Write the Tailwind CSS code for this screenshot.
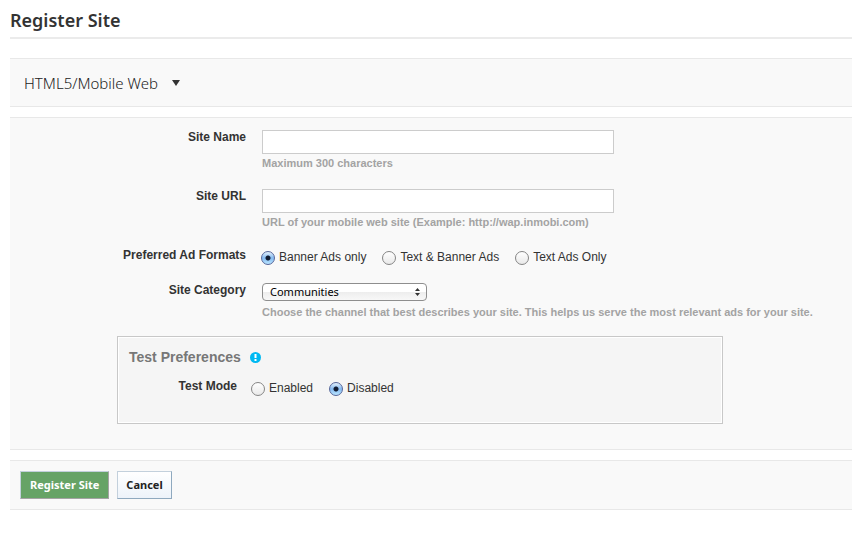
<!DOCTYPE html>
<html lang="en">
<head>
<meta charset="utf-8">
<meta name="viewport" content="width=device-width, initial-scale=1">
<title>Register Site</title>
<script src="https://cdn.jsdelivr.net/npm/@tailwindcss/browser@4"></script>
</head>
<body class="bg-white pl-[10px] font-['Liberation_Sans',Arial,sans-serif] text-[12px] leading-4 text-[#333]">
<header class="h-[39px] border-b-2 border-[#ebebeb] pt-2">
  <h1 class="font-['Noto_Sans',sans-serif] text-[18px] leading-6 font-semibold">Register Site</h1>
</header>
<main>
  <form>
    <section class="mt-[19px] flex h-[49px] items-center border-y border-[#e8e8e8] bg-[#f9f9f9] px-[14px]">
      <button type="button" class="flex items-center gap-[14px] font-['Noto_Sans',sans-serif] text-[15px] leading-6 font-light text-[#222]">
        <span>HTML5/Mobile Web</span>
        <svg class="h-[6px] w-2" viewBox="0 0 8 6" fill="#333" aria-hidden="true"><path d="M0 0h8L4 6z"/></svg>
      </button>
    </section>

    <section class="mt-[10px] border-y border-[#e8e8e8] bg-[#f9f9f9] pt-3 pb-[25px]">
      <div class="grid grid-cols-[236px_1fr] gap-x-4">
        <label for="name" class="text-right font-bold -mt-px">Site Name</label>
        <div class="h-[59px]">
          <input id="name" type="text" class="block h-6 w-[352px] border border-[#ccc] bg-white px-1 outline-none">
          <p class="mt-px text-[11px] font-bold text-[#a3a3a3]">Maximum 300 characters</p>
        </div>
        <label for="url" class="text-right font-bold -mt-px">Site URL</label>
        <div class="h-[59px]">
          <input id="url" type="text" class="block h-6 w-[352px] border border-[#ccc] bg-white px-1 outline-none">
          <p class="mt-px text-[11px] font-bold text-[#a3a3a3]">URL of your mobile web site (Example: http://wap.inmobi.com)</p>
        </div>
        <div id="formats" class="text-right font-bold -mt-px">Preferred Ad Formats</div>
        <div role="radiogroup" aria-labelledby="formats" class="flex h-[35px] items-start gap-4 pt-px">
          <label class="flex items-center gap-1"><input type="radio" name="fmt" checked class="mt-[2px] -ml-px size-[14px] appearance-none rounded-full border border-[#858585] bg-linear-to-b from-white to-[#e9e9e9] checked:border-[#56669a] checked:bg-[radial-gradient(circle,#111b30_0_2px,transparent_3px),linear-gradient(#e4f1fc,#84b9f0_50%,#b9e5ff)]">Banner Ads only</label>
          <label class="flex items-center gap-1"><input type="radio" name="fmt" class="mt-[2px] size-[14px] appearance-none rounded-full border border-[#858585] bg-linear-to-b from-white to-[#e9e9e9] checked:border-[#56669a] checked:bg-[radial-gradient(circle,#111b30_0_2px,transparent_3px),linear-gradient(#e4f1fc,#84b9f0_50%,#b9e5ff)]">Text &amp; Banner Ads</label>
          <label class="flex items-center gap-1"><input type="radio" name="fmt" class="mt-[2px] size-[14px] appearance-none rounded-full border border-[#858585] bg-linear-to-b from-white to-[#e9e9e9] checked:border-[#56669a] checked:bg-[radial-gradient(circle,#111b30_0_2px,transparent_3px),linear-gradient(#e4f1fc,#84b9f0_50%,#b9e5ff)]">Text Ads Only</label>
        </div>
        <label for="category" class="text-right font-bold -mt-px">Site Category</label>
        <div class="h-[53px]">
          <div class="relative w-[165px]">
            <select id="category" class="block h-[18px] w-full appearance-none rounded-[4px] border border-[#8e8e8e] bg-linear-to-b from-white from-50% via-[#ededed] via-50% to-[#f8f8f8] pl-[7px] font-['Noto_Sans',sans-serif] text-[11px] leading-4 text-black"><option>Communities</option></select>
            <svg class="pointer-events-none absolute top-[5px] right-[7px] h-2 w-[5px]" viewBox="0 0 5 8" fill="#333" aria-hidden="true"><path d="M2.500 0L5 3H0zM0 5h5L2.500 8z"/></svg>
          </div>
          <p class="mt-[3px] text-[11px] font-bold text-[#a3a3a3]">Choose the channel that best describes your site. This helps us serve the most relevant ads for your site.</p>
        </div>
      </div>
      <section class="ml-[107px] h-[88px] max-w-[606px] border border-[#c8c8c8] bg-[#f5f5f5] px-[11px] pt-3 inset-ring inset-ring-white">
        <div class="flex items-center gap-[9px]">
          <h2 class="text-[14px] leading-4 font-bold text-[#777]">Test Preferences</h2>
          <svg class="size-[11px]" viewBox="0 0 11 11" role="img" aria-label="Information"><circle cx="5.500" cy="5.500" r="5.500" fill="#00b9f2"/><path d="M4.500 2h2v4h-2zM4.500 7h2v2h-2z" fill="#fff"/></svg>
        </div>
        <div class="mt-[14px] grid grid-cols-[108px_1fr] gap-x-[14px]">
          <div id="mode" class="text-right font-bold -mt-px">Test Mode</div>
          <div role="radiogroup" aria-labelledby="mode" class="flex items-start gap-4 pt-px">
            <label class="flex items-center gap-1"><input type="radio" name="mode" class="mt-[2px] size-[14px] appearance-none rounded-full border border-[#858585] bg-linear-to-b from-white to-[#e9e9e9] checked:border-[#56669a] checked:bg-[radial-gradient(circle,#111b30_0_2px,transparent_3px),linear-gradient(#e4f1fc,#84b9f0_50%,#b9e5ff)]">Enabled</label>
            <label class="flex items-center gap-1"><input type="radio" name="mode" checked class="mt-[2px] size-[14px] appearance-none rounded-full border border-[#858585] bg-linear-to-b from-white to-[#e9e9e9] checked:border-[#56669a] checked:bg-[radial-gradient(circle,#111b30_0_2px,transparent_3px),linear-gradient(#e4f1fc,#84b9f0_50%,#b9e5ff)]">Disabled</label>
          </div>
        </div>
      </section>
    </section>

    <section class="mt-[10px] flex gap-2 border-y border-[#e8e8e8] bg-[#f9f9f9] px-[10px] py-[10px] font-['Noto_Sans',sans-serif] text-[11px] font-bold">
      <button type="submit" class="h-7 border border-[#a3a3a3] border-t-[#c3d0dc] border-l-[#c3d0dc] bg-[#66a366] px-[9px] text-white">Register Site</button>
      <button type="button" class="h-7 border border-[#8fa9bf] border-t-[#c3d0dc] border-l-[#c3d0dc] bg-linear-to-b from-white to-[#edf3fa] px-2 text-[#222]">Cancel</button>
    </section>
  </form>
</main>
</body>
</html>
